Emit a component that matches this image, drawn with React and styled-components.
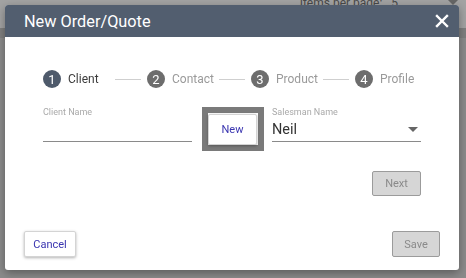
import React from 'react';
import styled, { createGlobalStyle } from 'styled-components';

const GlobalStyle = createGlobalStyle`
  html, body {
    margin: 0;
    padding: 0;
    background: #8b8b8b;
    font-family: Roboto, "Liberation Sans", sans-serif;
    overflow: hidden;
  }
`;

const Page = styled.div`
  width: 466px;
  height: 278px;
  background: #8b8b8b;
`;

const PageBar = styled.div`
  height: 28px;
  background: #a3a3a3;
  display: flex;
  justify-content: flex-end;
  align-items: flex-start;
  gap: 50px;
  padding: 0 8px 0 0;
  color: #4a4a4a;
  font-size: 12px;
  line-height: 12px;
`;

const PageText = styled.span`
  margin-top: -3px;
`;

const PageBand = styled.div`
  height: 10px;
  background: #7f7f7f;
`;

const Modal = styled.div`
  position: fixed;
  left: 5px;
  top: 5px;
  width: 454px;
  height: 265px;
  background: #fff;
  border-radius: 3px;
  overflow: hidden;
  box-shadow: 0 3px 10px rgba(0, 0, 0, 0.35);
  display: flex;
  flex-direction: column;
`;

const Header = styled.div`
  height: 32px;
  flex: none;
  background: #525e6f;
  color: #fff;
  display: flex;
  align-items: center;
  justify-content: space-between;
  padding: 0 10px 0 19px;
`;

const Title = styled.h2`
  margin: 0;
  font-size: 16.3px;
  font-weight: 400;
`;

const Close = styled.button`
  border: 0;
  background: none;
  padding: 0;
  width: 14px;
  height: 14px;
  display: flex;
  cursor: pointer;
`;

const Body = styled.div`
  flex: 1;
  display: flex;
  flex-direction: column;
  padding: 33px 38px 0;
`;

const Stepper = styled.div`
  display: flex;
  align-items: center;
  height: 18px;
  & > * {
    flex: none;
  }
`;

const Step = styled.div`
  display: flex;
  align-items: center;
  font-size: 12px;
  color: ${(p) => (p.active ? '#3c3c3c' : '#9a9a9a')};
`;

const StepLabel = styled.span`
  margin-left: 7px;
  min-width: 47px;
`;

const Num = styled.span`
  flex: none;
  width: 18px;
  height: 18px;
  border-radius: 50%;
  background: ${(p) => (p.active ? '#4e5a6b' : '#6d6d6d')};
  color: #fff;
  font-size: 13px;
  display: flex;
  align-items: center;
  justify-content: center;
`;

const Connector = styled.span`
  width: 26px;
  height: 1px;
  background: #cfcfcf;
  margin-right: 6px;
`;

const Fields = styled.div`
  display: flex;
  align-items: flex-start;
  margin-top: 19px;
`;

const Field = styled.div`
  width: 149px;
  display: flex;
  flex-direction: column;
`;

const Label = styled.label`
  font-size: 9px;
  color: #a9a9a9;
  line-height: 10px;
  height: 10px;
`;

const Input = styled.div`
  height: 24px;
  border-bottom: 1px solid #8a8a8a;
  display: flex;
  align-items: center;
  justify-content: space-between;
  font-size: 14.5px;
  color: #333;
  padding-right: 3px;
`;

const Caret = styled.span`
  width: 0;
  height: 0;
  border-left: 5px solid transparent;
  border-right: 5px solid transparent;
  border-top: 5px solid #666;
`;

const Focus = styled.div`
  margin: 0 8px 0 10px;
  border: 6px solid #7a7a7a;
  width: 50px;
  height: 32px;
  background: #fff;
  display: flex;
  align-items: center;
`;

const Button = styled.button`
  font-family: inherit;
  font-size: 11px;
  border-radius: 2px;
  padding: 0;
  cursor: pointer;
  width: ${(p) => p.w || 48}px;
  height: ${(p) => p.h || 26}px;
  color: ${(p) => (p.disabled ? '#8a8a8a' : '#3a35b0')};
  background: ${(p) => (p.disabled ? '#d6d6d6' : '#fff')};
  border: 1px solid ${(p) => (p.disabled ? '#9b9b9b' : '#d4d4d4')};
  box-shadow: ${(p) => (p.disabled ? 'none' : '0 1px 3px rgba(0,0,0,0.3)')};
`;

const NextRow = styled.div`
  display: flex;
  justify-content: flex-end;
  margin-top: 20px;
`;

const Footer = styled.div`
  display: flex;
  justify-content: space-between;
  align-items: center;
  padding: 0 19px 13px;
`;

const steps = ['Client', 'Contact', 'Product', 'Profile'];

export default function App() {
  return (
    <>
      <GlobalStyle />
      <Page>
        <PageBar>
          <PageText>Items per page: &nbsp; 5</PageText>
          <Caret />
        </PageBar>
        <PageBand />
      </Page>
      <Modal>
        <Header>
          <Title>New Order/Quote</Title>
          <Close aria-label="close">
            <svg width="14" height="14" viewBox="0 0 14 14">
              <path d="M2 2 L12 12 M12 2 L2 12" stroke="#fff" strokeWidth="2.4" strokeLinecap="square" />
            </svg>
          </Close>
        </Header>
        <Body>
          <Stepper>
            {steps.map((s, i) => (
              <React.Fragment key={s}>
                <Step active={i === 0}>
                  <Num active={i === 0}>{i + 1}</Num>
                  <StepLabel>{s}</StepLabel>
                </Step>
                {i < steps.length - 1 && <Connector />}
              </React.Fragment>
            ))}
          </Stepper>
          <Fields>
            <Field>
              <Label>Client Name</Label>
              <Input />
            </Field>
            <Focus>
              <Button w={49} h={31}>New</Button>
            </Focus>
            <Field>
              <Label>Salesman Name</Label>
              <Input>
                Neil
                <Caret />
              </Input>
            </Field>
          </Fields>
          <NextRow>
            <Button disabled w={49} h={25}>Next</Button>
          </NextRow>
        </Body>
        <Footer>
          <Button w={52} h={26}>Cancel</Button>
          <Button disabled w={48} h={26}>Save</Button>
        </Footer>
      </Modal>
    </>
  );
}
